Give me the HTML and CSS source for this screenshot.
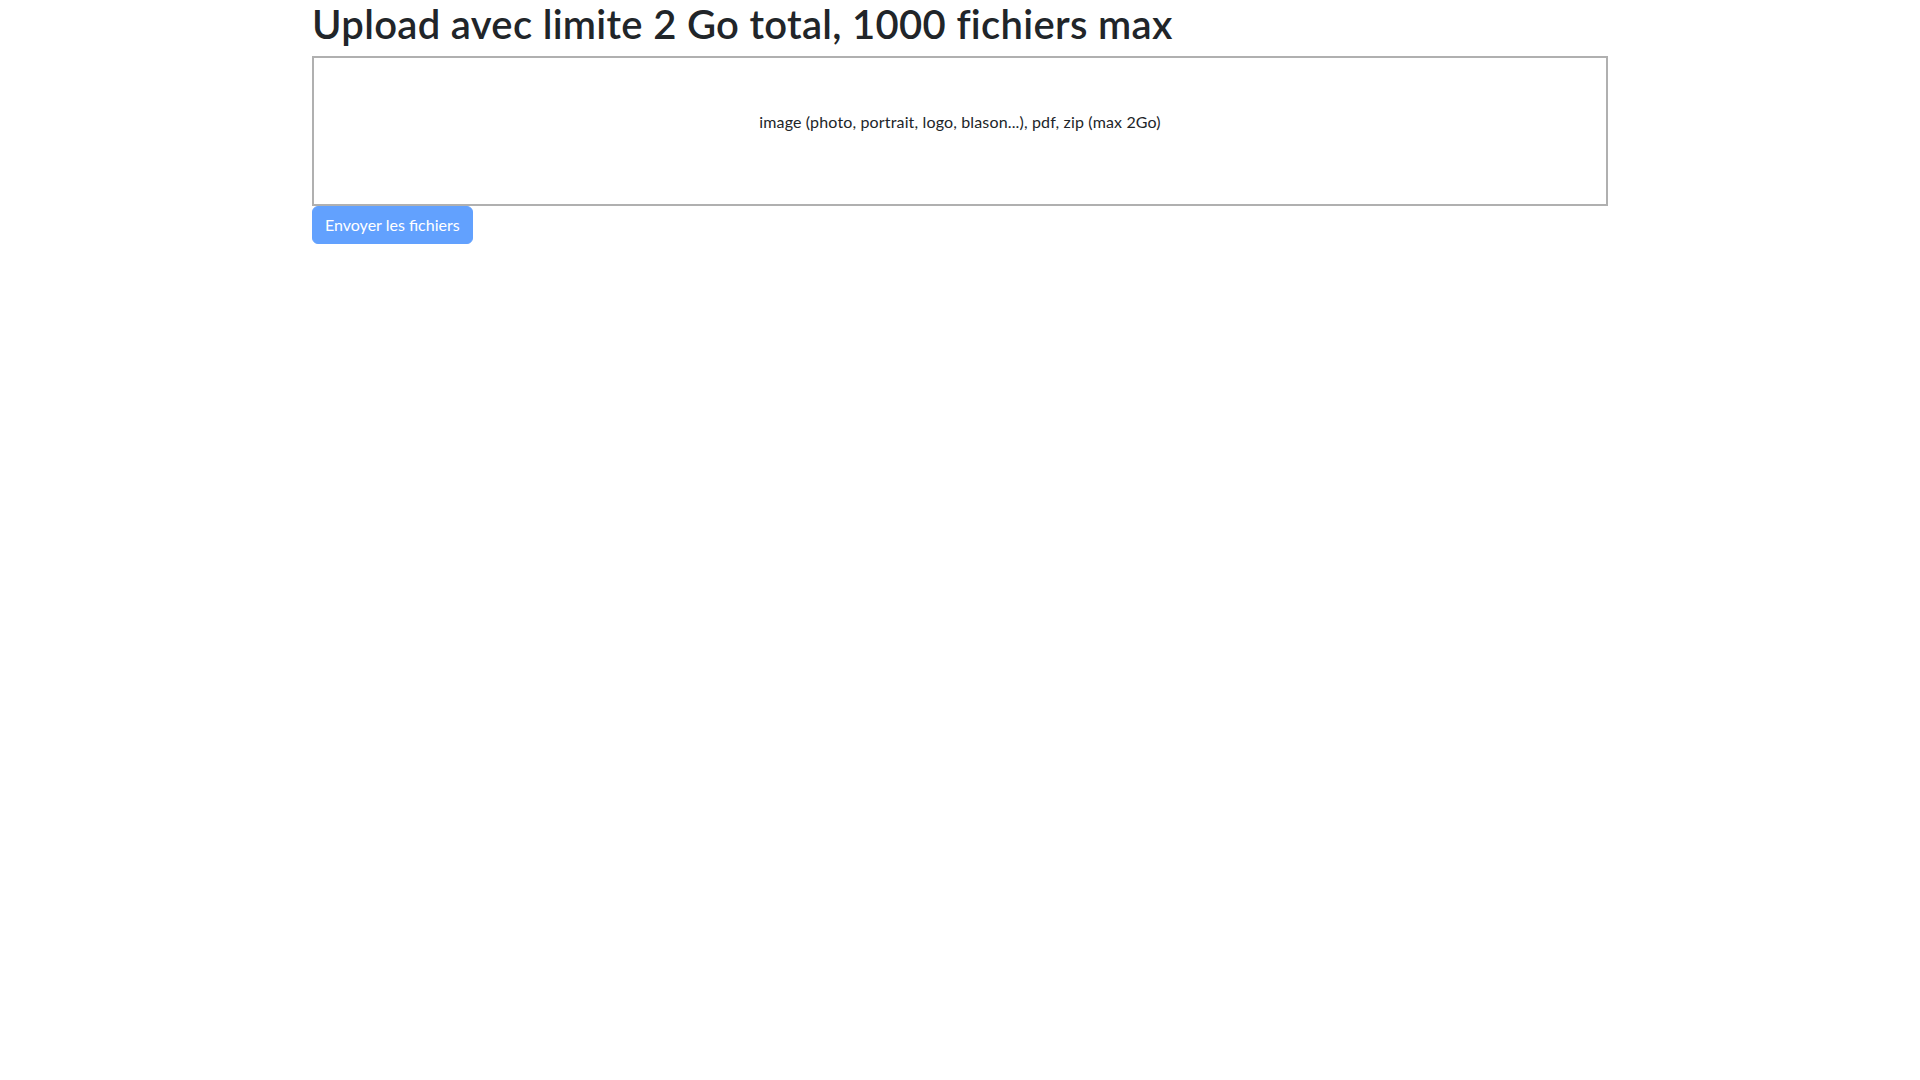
FILE: index.html
```html
<!DOCTYPE html>
<html lang="fr">
<head>
<meta charset="utf-8">
<title>Upload</title>
<link rel="stylesheet" href="styles.css">
</head>
<body>
<div class="container">
  <h1 class="title">Upload avec limite 2 Go total, 1000 fichiers max</h1>
  <form class="dropzone">
    <div class="dz-message"><button type="button" class="dz-button">image (photo, portrait, logo, blason...), pdf, zip (max 2Go)</button></div>
  </form>
  <button type="button" class="btn-send" disabled>Envoyer les fichiers</button>
</div>
</body>
</html>
```
FILE: styles.css
```css
*, *::before, *::after { box-sizing: border-box; }
body {
  margin: 0;
  font-family: "Lato", "Open Sans", sans-serif;
  font-size: 16px;
  line-height: 1.5;
  color: #212529;
  background: #fff;
}
.container {
  max-width: 1320px;
  margin: 0 auto;
  padding: 0 12px;
}
.title {
  margin: 0 0 8px;
  font-size: 40px;
  font-weight: 600;
  line-height: 1.2;
  letter-spacing: 0.3px;
}
.dropzone {
  min-height: 150px;
  border: 2px solid #b0b0b0;
  padding: 20px;
  background: #fff;
}
.dz-message {
  text-align: center;
  margin: 32px 0;
}
.dz-button {
  background: none;
  border: none;
  padding: 0;
  font: inherit;
  color: inherit;
  letter-spacing: 0.15px;
}
.btn-send {
  display: inline-block;
  font: inherit;
  line-height: 1.5;
  padding: 6px 12px;
  border: 1px solid #62a1fe;
  border-radius: 6px;
  background: #62a1fe;
  color: #fff;
}
```
